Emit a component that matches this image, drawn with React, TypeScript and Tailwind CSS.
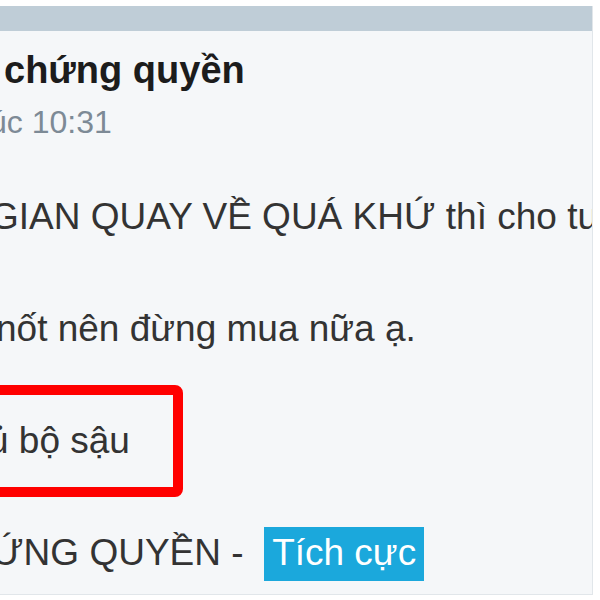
export default function App() {
  return (
    <div className="h-[600px] w-[600px] overflow-hidden bg-white pt-[6px] font-['Liberation_Sans',Arial,sans-serif]">
      <div className="h-[589px] w-[593px] overflow-hidden border-r border-b border-[#e1e6ea] bg-[#f5f7f9]">
        {/* top strip of the post card */}
        <div className="h-[25px] bg-[#bfcdd7]" />

        {/* author + time */}
        <div className="mt-[20px] ml-[4px] whitespace-nowrap text-[38px] leading-[38px] font-bold text-[#1c1c1c]">
          chứng quyền
        </div>
        <div className="mt-[17px] -ml-[11px] whitespace-nowrap text-[32px] leading-[32px] text-[#7d8a96]">
          úc 10:31
        </div>

        {/* post body */}
        <div className="mt-[51px] text-[37px] leading-[56px] text-[#333333] whitespace-nowrap">
          <div className="-ml-[10px]">GIAN QUAY VỀ QUÁ KHỨ thì cho tu</div>
          <div className="h-[56px]" />
          <div className="-ml-[4px]">nốt nên đừng mua nữa ạ.</div>
          <div className="h-[56px]" />
          <div className="relative -ml-[12px]">
            ủ bộ sậu
            <span className="absolute -top-[28px] left-[-30px] h-[112px] w-[225px] rounded-[8px] border-[10px] border-[#ff0000]" />
          </div>
          <div className="h-[56px]" />
          <div className="-ml-[8px]">
            ỨNG QUYỀN -{"\u00a0\u00a0"}
            <span className="bg-[#1ba8dc] px-[8px] pt-[5px] pb-[8px] text-white">Tích cực</span>
          </div>
        </div>
      </div>
    </div>
  );
}
